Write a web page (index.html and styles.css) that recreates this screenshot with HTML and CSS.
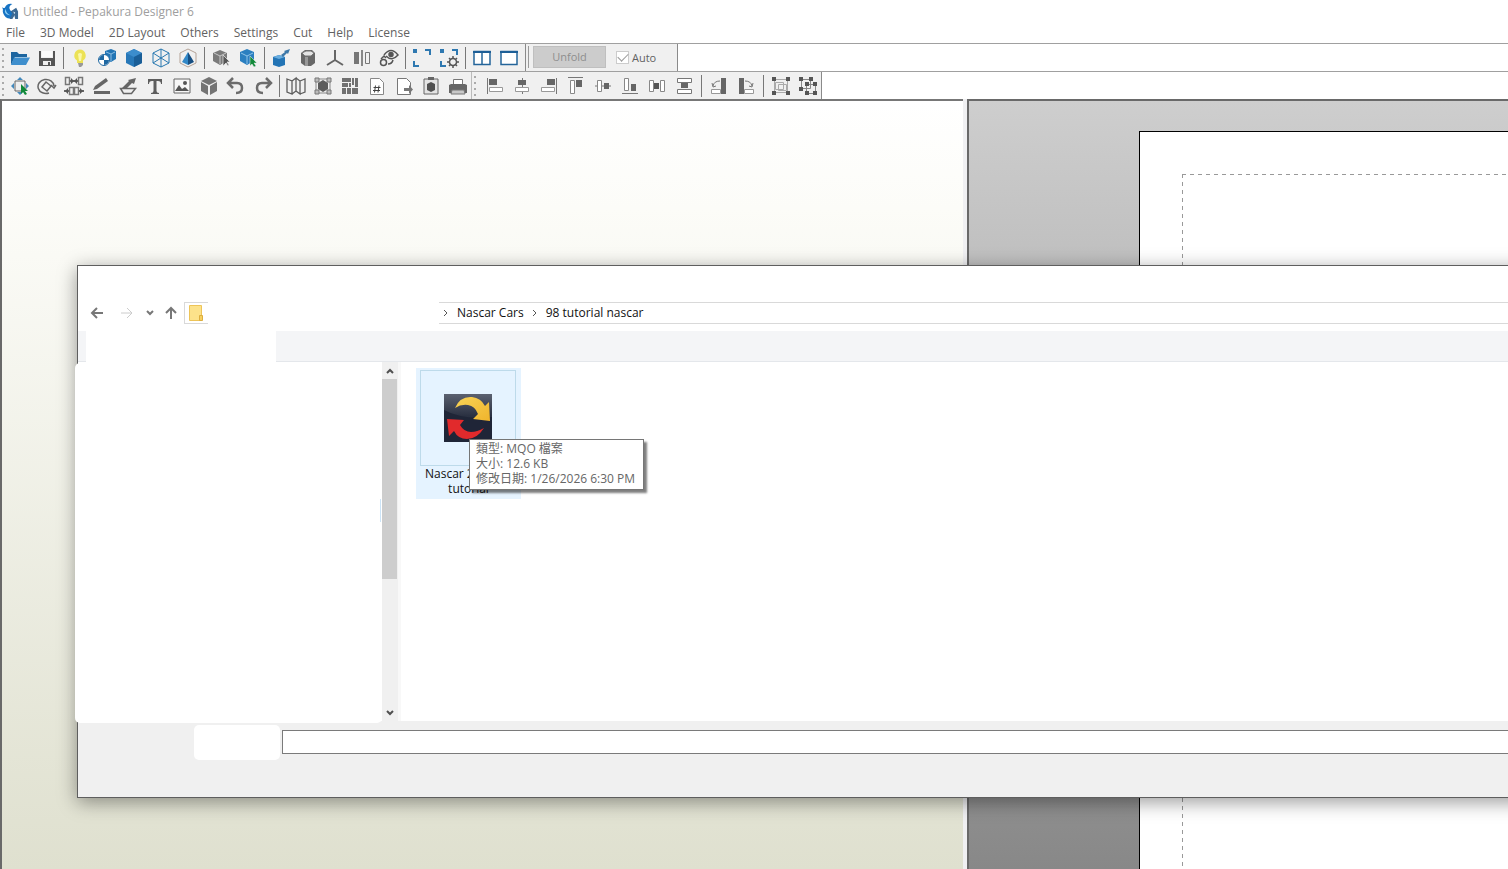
FILE: index.html
```html
<!DOCTYPE html>
<html lang="en">
<head>
<meta charset="utf-8">
<title>Untitled - Pepakura Designer 6</title>
<link rel="stylesheet" href="styles.css">
</head>
<body>
<header class="titlebar">
  <svg class="logo" viewBox="0 0 18 18"><path d="M0 4q1 2 3 1Q5 0 11 1 7 3 8 6q1 4 6 3l-2 6q-4 3-8 0Q0 11 1 7z" fill="#1673c4"/><path d="M4 6q0 5 5 7-5 0-6-4z" fill="#8fd0f5"/><path d="M9 9l6-4 2 4v8h-3l-1-4-2 4H8l3-6z" fill="#3d6a94"/><path d="M12 9l2 1-1 2z" fill="#dbeefa"/></svg>
  <span>Untitled - Pepakura Designer 6</span>
</header>
<nav class="menubar">
  <button>File</button><button>3D Model</button><button>2D Layout</button><button>Others</button><button>Settings</button><button>Cut</button><button>Help</button><button>License</button>
</nav>
<div class="toolrow">
  <div class="toolbar main-tools">
    <i class="grip"></i>
    <button aria-label="Open"><svg viewBox="0 0 20 20"><path d="M1 17V4h6l2 2h8v3H5z" fill="#1d659f"/><path d="M4 9.500h16L16 17H1z" fill="#3f8fcd"/></svg></button>
    <button aria-label="Save"><svg viewBox="0 0 20 20"><path d="M2 3h2v7h12V3h2v15H2z" fill="#555"/><path d="M5 3h10v6H5z" fill="#fafafa"/><path d="M6 13h8v4H6z" fill="#eee"/><path d="M11 14h2v3h-2z" fill="#555"/></svg></button>
    <i class="sep"></i>
    <button aria-label="Light"><svg viewBox="0 0 20 20"><path d="M10 1.500a6 6 0 0 0-3 11V15h6v-2.500a6 6 0 0 0-3-11z" fill="#ece255"/><path d="M8 6q2-2 4 0l-1 7H9z" fill="#fbf8a8"/><path d="M8 15h5v2l-2 2H9z" fill="#999"/></svg></button>
    <button aria-label="Texture"><svg viewBox="0 0 20 20"><path d="M8 3l6-2 5 2v8l-5 3-6-3z" fill="#2275b5"/><path d="M9 4l5 2v7M14 6l4-2" stroke="#8bbde3" fill="none"/><circle cx="7" cy="12" r="5.500" fill="#fff" stroke="#1f68a2"/><path d="M7 7a5 5 0 0 0-5 5h5zM7 12h5a5 5 0 0 1-5 5z" fill="#1f68a2"/></svg></button>
    <button aria-label="Solid"><svg viewBox="0 0 20 20"><path d="M10 1l8 4v10l-8 4-8-4V5z" fill="#2878b8"/><path d="M10 1l8 4-8 4-8-4z" fill="#3c8dcc"/><path d="M10 9l8-4v10l-8 4z" fill="#1a5e97"/></svg></button>
    <button aria-label="Wireframe"><svg viewBox="0 0 20 20" fill="none" stroke="#2878b0"><path d="M10 1l8 4v10l-8 4-8-4V5zM10 1v18M2 5l16 10M18 5L2 15"/></svg></button>
    <button aria-label="Pyramid"><svg viewBox="0 0 20 20"><path d="M10 1l8 4v10l-8 4-8-4V5z" fill="none" stroke="#b5a397"/><path d="M10 4L4 14l6 3z" fill="#3388c7"/><path d="M10 4l6 10-6 3z" fill="#174f82"/></svg></button>
    <i class="sep"></i>
    <button aria-label="Select part"><svg viewBox="0 0 20 20"><path d="M9 2l7 3v8l-7 4-7-4V5z" fill="#7a7a7a"/><path d="M3 5l6 3 6-3M9 8v8" stroke="#c8c8c8" fill="none"/><path d="M12 7v11l3-3 2 3 1-1-2-3h3z" fill="#555" stroke="#eee" stroke-width=".7"/></svg></button>
    <button aria-label="Pick part"><svg viewBox="0 0 20 20"><path d="M9 1l7 3v9l-7 4-7-4V4z" fill="#2b7fc0"/><path d="M3 5l6 3 6-3M9 8v8" stroke="#8fc3e9" fill="none"/><path d="M12 8v10l2-2 2 3 2-1-2-3h3z" fill="#128a3a" stroke="#eee" stroke-width=".5"/></svg></button>
    <i class="sep"></i>
    <button aria-label="Extrude"><svg viewBox="0 0 20 20"><path d="M2 9l6-2 6 2v8l-6 2-6-2z" fill="#2374b5"/><path d="M2 9l6-2 6 2-6 2z" fill="#69addf"/><path d="M10 7l4-3-1-1 6-2-2 5-1-1-4 4z" fill="#3d78a8"/></svg></button>
    <button aria-label="Cylinder"><svg viewBox="0 0 20 20"><path d="M3 5l4-3h7l3 3v10l-4 3H7l-4-3z" fill="#686868"/><path d="M4 5l4-2h5l3 2-3 3H7z" fill="#e4e4e4" stroke="#777"/><path d="M7 9v9h3V9z" fill="#999"/></svg></button>
    <button aria-label="Axes"><svg viewBox="0 0 20 20"><path d="M10 2v10M10 12l-8 5M10 12l8 5" stroke="#666" stroke-width="2" fill="none"/></svg></button>
    <button aria-label="Mirror"><svg viewBox="0 0 20 20"><path d="M2 4h5v12H2z" fill="#777"/><path d="M9 2h2v16H9z" fill="#888"/><path d="M13.500 4.500h4v11h-4z" fill="none" stroke="#777"/></svg></button>
    <button aria-label="View rotate"><svg viewBox="0 0 20 20" fill="none" stroke="#555" stroke-width="1.500"><path d="M5 7q7-9 14 0-6 7-12 1"/><circle cx="12" cy="6.500" r="2" fill="#555"/><circle cx="4.500" cy="14.500" r="3"/><path d="M2 11l3-3 2 2M9 16q4 0 5-4"/></svg></button>
    <i class="sep"></i>
    <button aria-label="Fit view"><svg viewBox="0 0 20 20" fill="#2e78b0"><path d="M1 1h4v4H1zM13 1h6v6h-2V3h-4zM1 13h2v4h4v2H1z"/></svg></button>
    <button aria-label="Fit settings"><svg viewBox="0 0 20 20" fill="#2e78b0"><path d="M1 1h4v4H1zM13 1h6v6h-2V3h-4zM1 13h2v4h4v2H1z"/><circle cx="14" cy="14" r="3.500" fill="none" stroke="#555" stroke-width="1.500"/><path d="M14 8v3M14 17v3M8 14h3M17 14h3M10 10l2 2M16 16l2 2M18 10l-2 2M12 16l-2 2" stroke="#555" stroke-width="1.500"/></svg></button>
    <i class="sep"></i>
    <button aria-label="Two panes"><svg viewBox="0 0 20 20"><path d="M2 3.500h16v13H2zM10 3v13" fill="#fff" stroke="#24659a" stroke-width="1.500"/><path d="M1 3h18v2H1z" fill="#1d5f97"/></svg></button>
    <button aria-label="One pane"><svg viewBox="0 0 20 20"><path d="M2 3.500h16v13H2z" fill="#fff" stroke="#24659a" stroke-width="1.500"/><path d="M1 3h18v2H1z" fill="#1d5f97"/></svg></button>
  </div>
  <div class="toolbar unfold-tools">
    <button class="unfold" disabled>Unfold</button>
    <label class="auto"><input type="checkbox" checked disabled><span>Auto</span></label>
  </div>
</div>
<div class="toolrow second">
  <div class="toolbar">
    <i class="grip"></i>
    <button aria-label="Move"><svg viewBox="0 0 20 20"><path d="M5 5h10v10H5z" fill="#eee" stroke="#666"/><path d="M10 1l3 3H7zM1 10l3-3v6zM19 10l-3-3v6zM10 19l-3-3h6z" fill="#4388bb"/><path d="M11 8v10l2-2 2 3 2-1-2-3h3z" fill="#128a3a"/></svg></button>
    <button aria-label="Rotate"><svg viewBox="0 0 20 20" fill="none" stroke="#666" stroke-width="1.500"><path d="M12 17A8 7 0 1 1 17 10M14 9l3 3 2-3M9 6l5 4-4 5-5-4z"/></svg></button>
    <button aria-label="Join"><svg viewBox="0 0 20 20"><path d="M1.500 1.500h4v7h-4zM14.500 1.500h4v7h-4zM5.500 11.500h4v7h-4zM10.500 11.500h4v7h-4z" fill="none" stroke="#777" stroke-width="1.500"/><path d="M6 5h8M0 15h5M15 15h5" stroke="#666" stroke-width="2"/><path d="M7 2l3 3-3 3zM13 2l-3 3 3 3zM4 12v6l-3-3zM16 12v6l3-3z" fill="#555"/></svg></button>
    <button aria-label="Edge color"><svg viewBox="0 0 20 20" fill="#666"><path d="M2 14l2-4L15 2l2 3L6 13zM3 15h16v3H3z"/></svg></button>
    <button aria-label="Flap"><svg viewBox="0 0 20 20"><path d="M4 12l7-7-1-1 8-2-2 6-2-1-5 5z" fill="#666"/><path d="M2.500 12.500h15l-4 5h-8z" fill="none" stroke="#666" stroke-width="1.500"/></svg></button>
    <button aria-label="Text"><svg viewBox="0 0 20 20"><path d="M3 3h14v5h-1q0-3-3-3h-1.500v10q0 2 2.500 2v1H6v-1q2.500 0 2.500-2V5H7Q4 5 4 8H3z" fill="#5d5d5d"/></svg></button>
    <button aria-label="Image"><svg viewBox="0 0 20 20"><path d="M2 3h16v14H2z" fill="#f7f7f7" stroke="#666"/><path d="M3 15l4-6 3 4 3-2 4 4z" fill="#555"/><circle cx="13" cy="7" r="2" fill="#555"/></svg></button>
    <button aria-label="Box"><svg viewBox="0 0 20 20" fill="#747474"><path d="M10 1l8 4-8 4-8-4zM2 6l7 4v9l-7-4zM11 10l7-4v9l-7 4z"/></svg></button>
    <button aria-label="Undo"><svg viewBox="0 0 20 20"><path d="M2 7h9q5 0 5 5t-6 5M7 2L2 7l5 5" fill="none" stroke="#6c6c6c" stroke-width="2.500"/></svg></button>
    <button aria-label="Redo"><svg viewBox="0 0 20 20"><path d="M18 7H9q-5 0-5 5t6 5M13 2l5 5-5 5" fill="none" stroke="#6c6c6c" stroke-width="2.500"/></svg></button>
    <i class="sep"></i>
    <button aria-label="Map"><svg viewBox="0 0 20 20"><path d="M1 3l5 2v13l-5-2zM6 5l4-3v13l-4 3M10 2l4 3v13l-4-3M14 5l5-2v13l-5 2" fill="none" stroke="#5e5e5e" stroke-width="1.300"/></svg></button>
    <button aria-label="Fit part"><svg viewBox="0 0 20 20"><path d="M3 3h14v14H3z" fill="none" stroke="#888"/><path d="M10 4l5 3v6l-5 3-5-3V7z" fill="#5c5c5c"/><path d="M2 2h4v4H2zM14 2h4v4h-4zM2 14h4v4H2zM14 14h4v4h-4z" fill="#bbb" stroke="#777"/></svg></button>
    <button aria-label="Arrange"><svg viewBox="0 0 20 20" fill="#707070"><path d="M2 2h9v4H2zM2 7h6v4H2zM2 12h4v6H2zM7 12h4v6H7zM12 2h2v7h-2zM15 2h3v9h-3zM9 7h2v4H9zM12 12h6v6h-6z"/></svg></button>
    <button aria-label="Page number"><svg viewBox="0 0 20 20"><path d="M3.500 2.500h9l4 4v12h-13z" fill="#fff" stroke="#888"/><path d="M8.500 9.500l-1 7M12 9.500l-1 7M6.500 11.500h7M6 14.500h7" stroke="#444" fill="none"/></svg></button>
    <button aria-label="Export page"><svg viewBox="0 0 20 20"><path d="M3.500 2.500h9l4 4v12h-13z" fill="#fff" stroke="#777"/><path d="M10 12h5v-3l4 4.500-4 4.500v-3h-5z" fill="#777"/></svg></button>
    <button aria-label="Clipboard"><svg viewBox="0 0 20 20"><path d="M3 3h14v15H3z" fill="#e4e4e4" stroke="#666"/><path d="M7 1h6v3H7z" fill="#666"/><path d="M10 6l4 2v6l-4 2-4-2V8z" fill="#505050"/></svg></button>
    <button aria-label="Print"><svg viewBox="0 0 20 20"><path d="M5.500 3.500h9v6h-9z" fill="#fff" stroke="#777"/><path d="M1 9l2-1h14l2 1v8H1z" fill="#666"/><path d="M4 14h12l1 4H3z" fill="#c8c8c8" stroke="#777"/></svg></button>
  </div>
  <div class="toolbar align-tools">
    <i class="grip"></i>
    <button aria-label="Align left"><svg viewBox="0 0 20 20"><path d="M2.500 2v16" stroke="#777"/><path d="M4 3h8v6H4z" fill="#666"/><path d="M4.500 11.500h13v4h-13z" fill="#fff" stroke="#999"/></svg></button>
    <button aria-label="Align centre"><svg viewBox="0 0 20 20"><path d="M10.500 2v16" stroke="#777"/><path d="M6 4h8v5H6z" fill="#666"/><path d="M3.500 11.500h13v4h-13z" fill="#fff" stroke="#999"/></svg></button>
    <button aria-label="Align right"><svg viewBox="0 0 20 20"><path d="M17.500 2v16" stroke="#777"/><path d="M8 3h8v6H8z" fill="#666"/><path d="M2.500 11.500h13v4h-13z" fill="#fff" stroke="#999"/></svg></button>
    <button aria-label="Align top"><svg viewBox="0 0 20 20"><path d="M2 1.500h15" stroke="#777"/><path d="M10 4h6v7h-6z" fill="#666"/><path d="M4.500 4.500h4v13h-4z" fill="#fff" stroke="#888"/></svg></button>
    <button aria-label="Align middle"><svg viewBox="0 0 20 20"><path d="M2 10h16" stroke="#777"/><path d="M11 7h5v6h-5z" fill="#666"/><path d="M4.500 4.500h4v11h-4z" fill="#fff" stroke="#888"/></svg></button>
    <button aria-label="Align bottom"><svg viewBox="0 0 20 20"><path d="M2 17.500h16" stroke="#777"/><path d="M11 8h5v7h-5z" fill="#666"/><path d="M4.500 2.500h4v12h-4z" fill="#fff" stroke="#888"/></svg></button>
    <button aria-label="Space across"><svg viewBox="0 0 20 20"><path d="M2.500 4.500h4v11h-4zM13.500 4.500h4v11h-4z" fill="#fff" stroke="#888"/><path d="M7 7h5v6H7z" fill="#555"/></svg></button>
    <button aria-label="Space down"><svg viewBox="0 0 20 20"><path d="M3.500 2.500h14v4h-14zM3.500 13.500h14v4h-14z" fill="#fff" stroke="#777"/><path d="M7 7h7v5H7z" fill="#666"/></svg></button>
    <i class="sep wide"></i>
    <button aria-label="Turn left"><svg viewBox="0 0 20 20"><path d="M12 2h5v16h-5z" fill="#666"/><path d="M2.500 13.500h9v4h-9z" fill="#fff" stroke="#999"/><path d="M4 10q1-5 7-5M3 7l1 4 3-1" fill="none" stroke="#777"/></svg></button>
    <button aria-label="Turn right"><svg viewBox="0 0 20 20"><path d="M3 2h5v16H3z" fill="#666"/><path d="M8.500 13.500h9v4h-9z" fill="#fff" stroke="#999"/><path d="M16 10q-1-5-7-5M17 7l-1 4-3-1" fill="none" stroke="#777"/></svg></button>
    <i class="sep wide"></i>
    <button aria-label="Group"><svg viewBox="0 0 20 20"><path d="M3.500 3.500h13v13h-13zM4.500 6.500h8v7h-8zM7.500 8.500h8v6h-8z" fill="none" stroke="#aaa"/><path d="M1 1h4v4H1zM15 1h4v4h-4zM1 15h4v4H1zM15 15h4v4h-4z" fill="#555"/></svg></button>
    <button aria-label="Ungroup"><svg viewBox="0 0 20 20"><path d="M3.500 3.500h9v9h-9zM8.500 8.500h9v9h-9z" fill="none" stroke="#888"/><path d="M1 1h4v4H1zM11 1h4v4h-4zM1 11h4v4H1zM7 6h4v4H7zM15 6h4v4h-4zM7 15h4v4H7zM15 15h4v4h-4z" fill="#555"/></svg></button>
  </div>
</div>
<main class="workspace">
  <section class="view3d"></section>
  <section class="view2d"><div class="paper"><div class="margins"></div></div></section>
  <div class="dialog" role="dialog" aria-label="Open">
    <div class="navrow">
      <button class="back" aria-label="Back"><svg viewBox="0 0 14 14"><path d="M13 7H2M7 2L2 7l5 5"/></svg></button>
      <button class="forward" aria-label="Forward"><svg viewBox="0 0 14 14"><path d="M1 7h11M7 2l5 5-5 5"/></svg></button>
      <button class="recent" aria-label="Recent"><svg viewBox="0 0 8 14"><path d="M1 5l3 3 3-3"/></svg></button>
      <button class="up" aria-label="Up"><svg viewBox="0 0 14 14"><path d="M7 13V2M2 7l5-5 5 5"/></svg></button>
      <span class="folder"><svg viewBox="0 0 14 18"><path d="M.5 1.500h12v15H.5z" fill="#fce28a" stroke="#edc458"/><path d="M10.500 11.500h3v5h-3z" fill="#f6d060" stroke="#dcae3e"/></svg></span>
      <div class="crumbs">
        <svg viewBox="0 0 6 10"><path d="M1 2l3 3-3 3"/></svg><a href="#">Nascar Cars</a>
        <svg viewBox="0 0 6 10"><path d="M1 2l3 3-3 3"/></svg><a href="#">98 tutorial nascar</a>
      </div>
    </div>
    <div class="commands"><div class="blank"></div></div>
    <div class="browser">
      <div class="tree"><i class="treemark"></i></div>
      <div class="scroll">
        <button aria-label="Scroll up"><svg viewBox="0 0 10 10"><path d="M2 7l3-3 3 3"/></svg></button>
        <div class="track"><div class="thumb"></div></div>
        <button aria-label="Scroll down"><svg viewBox="0 0 10 10"><path d="M2 3l3 3 3-3"/></svg></button>
      </div>
      <div class="files">
        <div class="file">
          <div class="preview">
            <svg viewBox="0 0 48 48"><defs><linearGradient id="g" x2="0" y2="1"><stop stop-color="#5b6170"/><stop offset=".45" stop-color="#2b3142"/><stop offset="1" stop-color="#252b3d"/></linearGradient><linearGradient id="y" x2="1" y2="1"><stop stop-color="#f9d457"/><stop offset="1" stop-color="#f0b42c"/></linearGradient></defs><path d="M0 0h48v48H0z" fill="url(#g)"/><path d="M0 16q18 10 48 7v25H0z" fill="#1f2537"/><path d="M11 14Q16 2 28 3q9 1 13 9l4-4 1 19-17-2 5-5q-3-8-10-9-7-1-13 3z" fill="url(#y)"/><path d="M3 25l17 1-4 5q4 7 11 7 6 0 13-4-7 11-17 11-9 0-13-8l-5 5z" fill="#e12a2c"/></svg>
          </div>
          <div class="name">Nascar 2</div>
          <div class="name second-line">tutorial</div>
          <div class="tip" role="tooltip" lang="zh-Hant"><div>類型: MQO 檔案</div><div>大小: 12.6 KB</div><div>修改日期: 1/26/2026 6:30 PM</div></div>
        </div>
      </div>
    </div>
    <div class="footer"><span class="cover"></span><input type="text" aria-label="File name"></div>
  </div>
</main>
</body>
</html>
```
FILE: styles.css
```css
* { box-sizing: border-box; }
body {
  margin: 0;
  min-height: 100vh;
  display: flex;
  flex-direction: column;
  background: #fff;
  color: #626262;
  font: 12px/16px "Open Sans", "Noto Sans CJK TC", sans-serif;
  overflow: hidden;
}
button { border: 0; padding: 0; background: none; color: inherit; font: inherit; }
svg { display: block; }
.titlebar { display: flex; align-items: center; gap: 4px; height: 23px; padding-left: 2px; color: #9e9e9e; }
.logo { width: 17px; height: 17px; }
.menubar { display: flex; gap: 15px; height: 20px; padding-left: 6px; }
.toolrow { display: flex; height: 28px; border-top: 1px solid #a0a0a0; }
.toolbar { display: flex; align-items: center; background: #f0f0f0; border-right: 1px solid #8a8a8a; }
.toolbar button { width: 27px; display: flex; justify-content: center; }
.toolbar button svg { width: 20px; height: 20px; }
.grip { width: 6px; height: 24px; background: radial-gradient(circle, #aaa 1px, transparent 1px) 0 0 / 6px 6px repeat-y; }
.sep { width: 6px; height: 22px; background: linear-gradient(#777, #777) center / 1px 100% no-repeat; }
.sep.wide { width: 8px; }
.toolbar.main-tools { padding-right: 3px; }
.toolbar.unfold-tools { padding-left: 2px; align-items: flex-start; }
.unfold-tools::before { content: ""; width: 1px; height: 22px; margin: 2px 4px 0 0; background: #999; }
.toolbar .unfold { width: 73px; height: 22px; align-items: center; margin: 2px 10px 0 0; background: #ccc; border: 1px solid #bfbfbf; color: #8e8e8e; font-size: 11px; }
.auto { display: flex; align-items: center; gap: 3px; width: 61px; height: 27px; font-size: 11px; }
.auto input { appearance: none; width: 13px; height: 13px; margin: 0; border: 1px solid #ccc; background: #fff; display: grid; place-items: center; }
.auto input::before { content: ""; width: 9px; height: 5px; margin-bottom: 3px; border: solid #999; border-width: 0 0 1px 1px; transform: rotate(-45deg); }
.second .toolbar:first-child { border-right-color: #bbb; }
.align-tools .grip { width: 9px; }
.workspace {
  position: relative;
  flex: 1;
  display: grid;
  grid-template-columns: 963fr 541fr;
  gap: 4px;
  background: #f0f0f2;
  overflow: hidden;
}
.view3d { border: solid #696969; border-width: 2px 0 0 2px; border-top-color: #777; background: linear-gradient(#fff, #fcfcf8 14%, #dfe0cf); }
.view2d { border: solid #696969; border-width: 2px 0 0 2px; background: linear-gradient(#cecece, #888); display: flex; padding: 30px 0 0 170px; }
.paper { flex: 1; border: solid #000; border-width: 1px 0 0 1px; background: #fff; padding: 42px 0 0 42px; display: flex; }
.margins {
  flex: 1;
  background:
    repeating-linear-gradient(90deg, #999 0 4px, transparent 4px 8px) top / 100% 1px no-repeat,
    repeating-linear-gradient(#999 0 4px, transparent 4px 8px) left / 1px 100% no-repeat;
}
.dialog {
  position: absolute;
  top: 166px;
  left: 77px;
  right: -40px;
  border: solid #5e5e5e;
  border-width: 1px 0 1px 1px;
  background: #fff;
  color: #111;
  box-shadow: 0 4px 18px rgba(0, 0, 0, .4);
}
.navrow { display: flex; align-items: center; padding: 36px 0 7px 12px; }
.navrow button svg { width: 14px; height: 14px; fill: none; stroke: #777; stroke-width: 2; }
.back { margin-right: 16px; }
.navrow .forward svg { stroke: #ccc; stroke-width: 1; }
.forward { margin-right: 12px; }
.navrow .recent svg { width: 8px; stroke-width: 2; }
.recent { margin-right: 10px; }
.up { margin-right: 6px; }
.folder { width: 24px; height: 22px; padding: 1px 4px; border: solid #d9d9d9; border-width: 1px 0 1px 1px; }
.folder svg { width: 14px; height: 18px; }
.crumbs { flex: 1; display: flex; align-items: center; height: 22px; margin-left: 231px; padding-left: 4px; border: solid #d9d9d9; border-width: 1px 0; }
.crumbs svg { width: 6px; height: 10px; fill: none; stroke: #555; margin-right: 8px; }
.crumbs a { color: inherit; text-decoration: none; margin-right: 8px; }
.commands { height: 31px; padding-left: 8px; background: #f4f5f7; border-bottom: 1px solid #e4e7eb; }
.blank { width: 190px; height: 31px; background: #fff; }
.browser { display: flex; height: 359px; }
.tree { position: relative; flex: 0 0 307px; height: 360px; margin: 1px 0 0 -3px; background: #fff; border-radius: 5px; }
.treemark { position: absolute; right: 1px; top: 136px; width: 1px; height: 23px; background: #cce4f7; }
.scroll { flex: 0 0 19px; display: flex; flex-direction: column; background: #f0f0f0; border-right: 3px solid #f8f8f8; }
.scroll button { height: 17px; display: flex; justify-content: center; align-items: center; }
.scroll svg { width: 10px; height: 10px; fill: none; stroke: #505050; stroke-width: 2; }
.track { flex: 1; }
.thumb { height: 200px; margin-right: 1px; background: #cdcdcd; }
.files { flex: 1; padding: 6px 0 0 15px; }
.file { position: relative; width: 105px; height: 131px; padding: 2px 4px; background: #e5f3ff; line-height: 15px; }
.preview { display: grid; place-items: center; width: 96px; height: 96px; border: 1px solid #bddaea; }
.preview svg { width: 48px; height: 48px; }
.name { padding-left: 5px; }
.name.second-line { padding: 0; text-align: center; }
.tip { position: absolute; left: 53px; top: 71px; padding: 1px 8px 3px 6px; border: 1px solid #767676; background: #fff; color: #666; white-space: nowrap; box-shadow: 3px 3px 2px rgba(0, 0, 0, .5); }
.footer { display: flex; height: 76px; padding: 4px 0 0 116px; background: #f0f0f0; }
.cover { width: 86px; height: 35px; margin-right: 2px; border-radius: 5px; background: #fff; }
.footer input { flex: 1; height: 24px; margin: 5px 0 0; border: 1px solid #7a7a7a; border-right: 0; background: #fff; }
```
